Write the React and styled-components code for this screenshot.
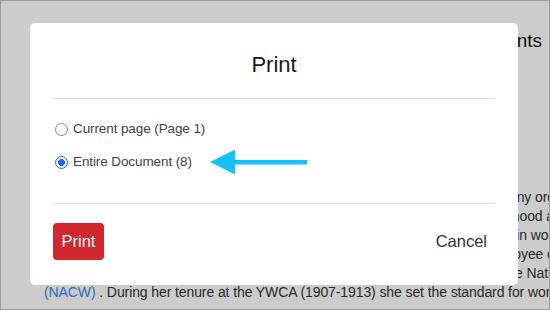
import React from "react";
import styled, { createGlobalStyle } from "styled-components";

const GlobalStyle = createGlobalStyle`
  html, body { margin: 0; padding: 0; background: #fff; }
  body { font-family: "Liberation Sans", Arial, Helvetica, sans-serif; }
  * { box-sizing: border-box; }
`;

const Page = styled.div`
  position: relative;
  width: 550px;
  height: 310px;
  border: 1px solid #9c9c9c;
  overflow: hidden;
  background: #fff;
`;

const Doc = styled.div`
  display: flex;
  flex-direction: column;
  padding-top: 29px;
  color: #333;
`;

const Heading = styled.h2`
  margin: 0;
  font-size: 19px;
  font-weight: normal;
  line-height: 22px;
  color: #111;
  text-align: right;
  padding-right: 7px;
  white-space: nowrap;
`;

const Lines = styled.div`
  display: flex;
  flex-direction: column;
  margin-top: 136px;
  font-size: 14px;
  letter-spacing: -0.1px;
  line-height: 19px;
`;

const Line = styled.div`
  white-space: nowrap;
  text-align: ${(p) => (p.$right ? "right" : "left")};
  margin-right: ${(p) => (p.$right ? `-${p.$cut || 0}px` : "0")};
  padding-left: ${(p) => (p.$right ? "0" : "43px")};
`;

const DocLink = styled.a`
  color: #3787e8;
  text-decoration: none;
`;

const Backdrop = styled.div`
  position: absolute;
  inset: 0;
  background: rgba(0, 0, 0, 0.2);
  display: flex;
  align-items: flex-start;
  justify-content: flex-start;
  padding: 22px 0 0 29px;
`;

const Modal = styled.div`
  width: 488px;
  height: 262px;
  background: #fff;
  border-radius: 5px;
  padding: 0 23px;
  display: flex;
  flex-direction: column;
`;

const Header = styled.div`
  height: 76px;
  border-bottom: 1px solid #dedede;
  display: flex;
  align-items: center;
  justify-content: center;
  padding-top: 8px;
`;

const Title = styled.h1`
  margin: 0;
  font-size: 22px;
  font-weight: normal;
  color: #1a1a1a;
`;

const Body = styled.div`
  height: 105px;
  border-bottom: 1px solid #dedede;
  display: flex;
  flex-direction: column;
  gap: 11px;
  padding-top: 21px;
`;

const Option = styled.label`
  display: flex;
  align-items: center;
  gap: 5px;
  padding-left: 2px;
  font-size: 13.5px;
  letter-spacing: -0.1px;
  line-height: 18px;
  color: #444;
`;

const Radio = styled.input.attrs({ type: "radio" })`
  appearance: none;
  margin: 0;
  width: 13px;
  height: 13px;
  border-radius: 50%;
  border: 1px solid #8a8a8a;
  background: #fff;
  flex: none;
  &:checked {
    border: 1.5px solid #1f6cf5;
    background: radial-gradient(circle, #1a6af4 0 3.2px, #fff 3.7px);
  }
`;

const Arrow = styled.svg`
  margin-left: 13px;
  flex: none;
`;

const Footer = styled.div`
  flex: 1;
  display: flex;
  align-items: center;
  justify-content: space-between;
  padding: 0 8px 7px 0;
`;

const PrintButton = styled.button`
  width: 51px;
  height: 37px;
  border: none;
  border-radius: 4px;
  background: #d3262d;
  color: #fff;
  font-family: inherit;
  font-size: 16.5px;
  padding: 0;
`;

const CancelButton = styled.button`
  border: none;
  background: none;
  color: #333;
  font-family: inherit;
  font-size: 16.5px;
  padding: 0;
`;

export default function App() {
  return (
    <>
      <GlobalStyle />
      <Page>
        <Doc>
          <Heading>Biography and Related Documents</Heading>
          <Lines>
            <Line $right $cut={6}>she was active in many org</Line>
            <Line $right $cut={5}>in her neighborhood a</Line>
            <Line $right $cut={4}>as a leader in wor</Line>
            <Line $right $cut={5}>the first African American employee c</Line>
            <Line $right $cut={2}>the Nati</Line>
            <Line>
              <DocLink>(NACW)</DocLink> . During her tenure at the YWCA (1907-1913) she set the standard for work
            </Line>
          </Lines>
        </Doc>
        <Backdrop>
          <Modal>
            <Header>
              <Title>Print</Title>
            </Header>
            <Body>
              <Option>
                <Radio name="range" />
                Current page (Page 1)
              </Option>
              <Option>
                <Radio name="range" defaultChecked />
                Entire Document (8)
                <Arrow width="97" height="26" viewBox="0 0 97 26">
                  <path d="M0 13 L25 0.5 L25 25.5 Z" fill="#13c3f6" />
                  <rect x="23" y="11" width="74" height="4.5" fill="#13c3f6" />
                </Arrow>
              </Option>
            </Body>
            <Footer>
              <PrintButton>Print</PrintButton>
              <CancelButton>Cancel</CancelButton>
            </Footer>
          </Modal>
        </Backdrop>
      </Page>
    </>
  );
}
